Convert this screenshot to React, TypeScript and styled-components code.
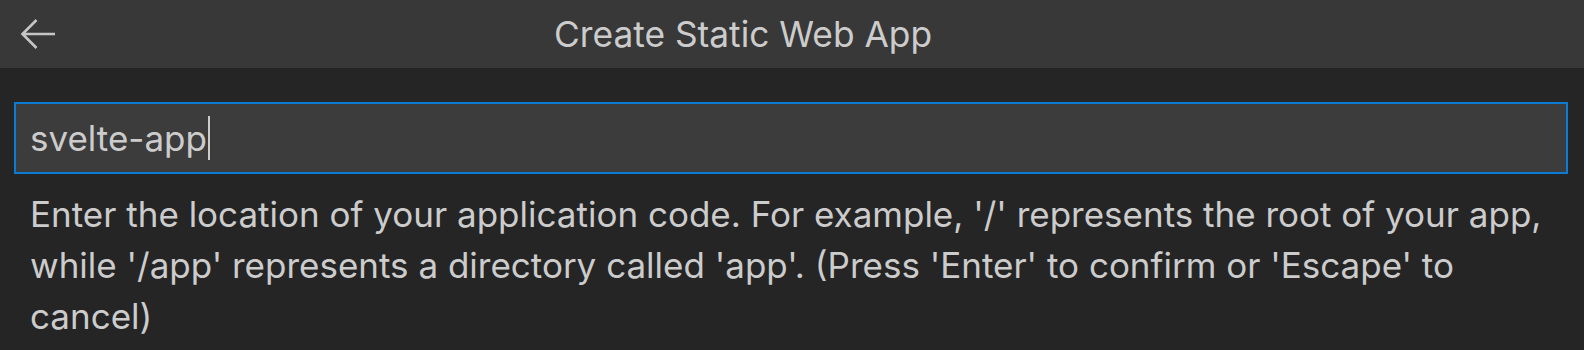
import styled, { createGlobalStyle } from 'styled-components';

const GlobalStyle = createGlobalStyle`
  html, body {
    margin: 0;
    padding: 0;
    background: #252526;
  }
  body {
    font-family: Inter, "Noto Sans", "Liberation Sans", sans-serif;
    color: #cccccc;
  }
`

const Widget = styled.div`
  width: 1584px;
  height: 350px;
  background: #252526;
  overflow: hidden;
`

const TitleBar = styled.div`
  display: flex;
  align-items: center;
  height: 68px;
  background: #383838;
`

const BackButton = styled.div`
  display: flex;
  align-items: center;
  justify-content: flex-start;
  width: 70px;
  height: 100%;
  padding-left: 20px;
  box-sizing: border-box;
`

const Title = styled.div`
  flex: 1;
  text-align: center;
  font-size: 35.3px;
  color: #cccccc;
`

const Spacer = styled.div`
  width: 168px;
`

const Body = styled.div`
  padding: 34px 16px 0 14px;
`

const InputBox = styled.div`
  display: flex;
  align-items: center;
  height: 72px;
  box-sizing: border-box;
  border: 2px solid #0a7cd6;
  background: #3c3c3c;
  padding-left: 14px;
  font-size: 35px;
  color: #cccccc;
`

const Caret = styled.span`
  display: inline-block;
  width: 2px;
  height: 44px;
  margin-left: 1px;
  background: #cccccc;
`

const Message = styled.div`
  padding: 15px 0 0 16px;
  font-size: 35px;
  line-height: 51px;
  color: #cccccc;
`

function ArrowLeft() {
  return (
    <svg width="36" height="32" viewBox="0 0 36 32" fill="none">
      <path d="M35 16 H2.5 M16.5 2 L2.5 16 L16.5 30" stroke="#c5c5c5" strokeWidth="2.6" strokeLinecap="butt" strokeLinejoin="miter" />
    </svg>
  )
}

export default function App() {
  return (
    <Widget>
      <GlobalStyle />
      <TitleBar>
        <BackButton>
          <ArrowLeft />
        </BackButton>
        <Title>Create Static Web App</Title>
        <Spacer />
      </TitleBar>
      <Body>
        <InputBox>
          <span>svelte-app</span>
          <Caret />
        </InputBox>
        <Message>
          Enter the location of your application code. For example, '/' represents the root of your app, while '/app' represents a directory called 'app'. (Press 'Enter' to confirm or 'Escape' to cancel)
        </Message>
      </Body>
    </Widget>
  )
}
